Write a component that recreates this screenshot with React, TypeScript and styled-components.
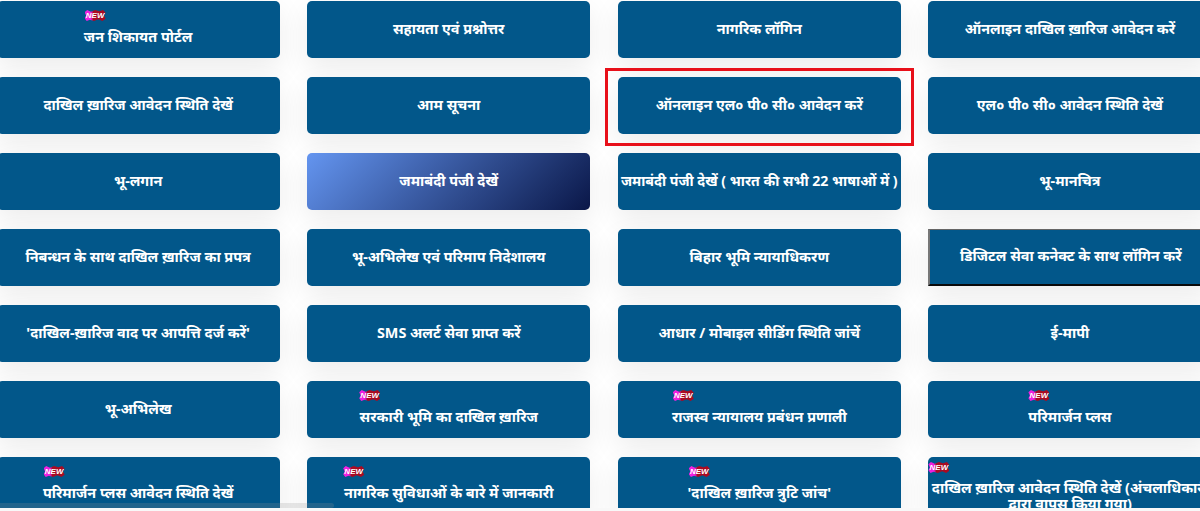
import styled, { createGlobalStyle, css } from 'styled-components';

interface Tile {
  label: string;
  newLeft?: number;
  gradient?: boolean;
  outlined?: boolean;
  tight?: boolean;
  twoLine?: boolean;
}

const tiles: Tile[] = [
  { label: 'जन शिकायत पोर्टल', newLeft: 88 },
  { label: 'सहायता एवं प्रश्नोत्तर' },
  { label: 'नागरिक लॉगिन' },
  { label: 'ऑनलाइन दाखिल ख़ारिज आवेदन करें' },
  { label: 'दाखिल ख़ारिज आवेदन स्थिति देखें' },
  { label: 'आम सूचना' },
  { label: 'ऑनलाइन एल० पी० सी० आवेदन करें' },
  { label: 'एल० पी० सी० आवेदन स्थिति देखें' },
  { label: 'भू-लगान' },
  { label: 'जमाबंदी पंजी देखें', gradient: true },
  { label: 'जमाबंदी पंजी देखें ( भारत की सभी 22 भाषाओं में )', tight: true },
  { label: 'भू-मानचित्र' },
  { label: 'निबन्धन के साथ दाखिल ख़ारिज का प्रपत्र' },
  { label: 'भू-अभिलेख एवं परिमाप निदेशालय' },
  { label: 'बिहार भूमि न्यायाधिकरण' },
  { label: 'डिजिटल सेवा कनेक्ट के साथ लॉगिन करें', outlined: true },
  { label: "'दाखिल-ख़ारिज वाद पर आपत्ति दर्ज करें'" },
  { label: 'SMS अलर्ट सेवा प्राप्त करें' },
  { label: 'आधार / मोबाइल सीडिंग स्थिति जांचें' },
  { label: 'ई-मापी' },
  { label: 'भू-अभिलेख' },
  { label: 'सरकारी भूमि का दाखिल ख़ारिज', newLeft: 52 },
  { label: 'राजस्व न्यायालय प्रबंधन प्रणाली', newLeft: 55 },
  { label: 'परिमार्जन प्लस', newLeft: 100 },
  { label: 'परिमार्जन प्लस आवेदन स्थिति देखें', newLeft: 47 },
  { label: 'नागरिक सुविधाओं के बारे में जानकारी', newLeft: 36 },
  { label: "'दाखिल ख़ारिज त्रुटि जांच'", newLeft: 71 },
  {
    label: 'दाखिल ख़ारिज आवेदन स्थिति देखें (अंचलाधिकारी द्वारा वापस किया गया)',
    newLeft: 0,
    twoLine: true,
  },
];

const GlobalStyle = createGlobalStyle`
  html, body {
    margin: 0;
    height: 511px;
    overflow: hidden;
    background: #fff;
  }
`;

const Page = styled.div`
  position: relative;
  width: 1200px;
  height: 511px;
  overflow: hidden;
  font-family: "Noto Sans", "Noto Sans Devanagari", "Lohit Devanagari", "FreeSans", "Liberation Sans", sans-serif;
`;

const Grid = styled.div`
  display: grid;
  grid-template-columns: repeat(4, 283px);
  grid-auto-rows: 57px;
  column-gap: 27.6px;
  row-gap: 19px;
  margin: 1px 0 0 -3.4px;
`;

const Button = styled.a<{ $gradient?: boolean; $outlined?: boolean; $flush?: boolean }>`
  position: relative;
  display: flex;
  align-items: center;
  justify-content: center;
  box-sizing: border-box;
  padding: ${(p) => (p.$flush ? '0 0 2px' : '0 6px 2px')};
  border-radius: 5px;
  background: #02578a;
  box-shadow: 0 10px 28px rgba(0, 0, 0, 0.08);
  color: #fff;
  font-size: 14.4px;
  font-weight: 700;
  line-height: 16px;
  text-align: center;
  ${(p) =>
    p.$gradient &&
    css`
      background: linear-gradient(135deg, #6495f0 0%, #3a5ba3 45%, #0a1748 100%);
    `}
  ${(p) =>
    p.$outlined &&
    css`
      border-radius: 0;
      border-style: solid;
      border-width: 1px 0 2px 2px;
      border-color: #666 #222 #0a0a0a #777;
    `}
`;

const Label = styled.span<{ $offset: number }>`
  display: block;
  margin-top: ${(p) => p.$offset}px;
`;

const TightLabel = styled(Label)`
  flex-shrink: 0;
  white-space: nowrap;
  font-size: 14.1px;
`;

const NewBadge = styled.span<{ $top: number }>`
  position: absolute;
  top: ${(p) => p.$top}px;
  height: 11px;
  width: 21px;
  display: flex;
  align-items: center;
  justify-content: center;
  background: linear-gradient(90deg, #f01fe0 0%, #f01fe0 28%, #a80b22 40%, #a80b22 100%);
  clip-path: polygon(0 20%, 12% 0, 30% 15%, 50% 0, 70% 12%, 88% 0, 100% 25%, 92% 50%, 100% 80%, 85% 100%, 65% 85%, 45% 100%, 25% 88%, 10% 100%, 0 75%, 7% 50%);
  color: #fff;
  font-family: "Liberation Sans", sans-serif;
  font-size: 8px;
  font-weight: 700;
  font-style: italic;
  line-height: 1;
`;

const Highlight = styled.div`
  position: absolute;
  left: 605px;
  top: 68px;
  width: 309px;
  height: 78px;
  box-sizing: border-box;
  border: 3px solid #e8101a;
`;

// browser scrollbar thumb left over at the bottom of the capture
const ScrollThumb = styled.div`
  position: absolute;
  left: 0;
  bottom: 3px;
  width: 334px;
  height: 5px;
  border-radius: 0 3px 3px 0;
  background: rgba(150, 150, 150, 0.22);
`;

const BottomEdge = styled.div`
  position: absolute;
  left: 0;
  right: 0;
  bottom: 0;
  height: 3px;
  background: #f8f8f8;
`;

export default function App() {
  return (
    <Page>
      <GlobalStyle />
      <Grid>
        {tiles.map((tile) => {
          const hasBadge = tile.newLeft !== undefined;
          const offset = tile.twoLine ? 23 : hasBadge ? 16 : 0;
          return (
            <Button
              key={tile.label}
              $gradient={tile.gradient}
              $outlined={tile.outlined}
              $flush={tile.tight || tile.twoLine}
            >
              {hasBadge && (
                <NewBadge $top={tile.twoLine ? 5 : 9} style={{ left: tile.newLeft }}>
                  NEW
                </NewBadge>
              )}
              {tile.tight ? (
                <TightLabel $offset={offset}>{tile.label}</TightLabel>
              ) : (
                <Label $offset={offset}>{tile.label}</Label>
              )}
            </Button>
          );
        })}
      </Grid>
      <ScrollThumb />
      <BottomEdge />
      <Highlight />
    </Page>
  );
}
